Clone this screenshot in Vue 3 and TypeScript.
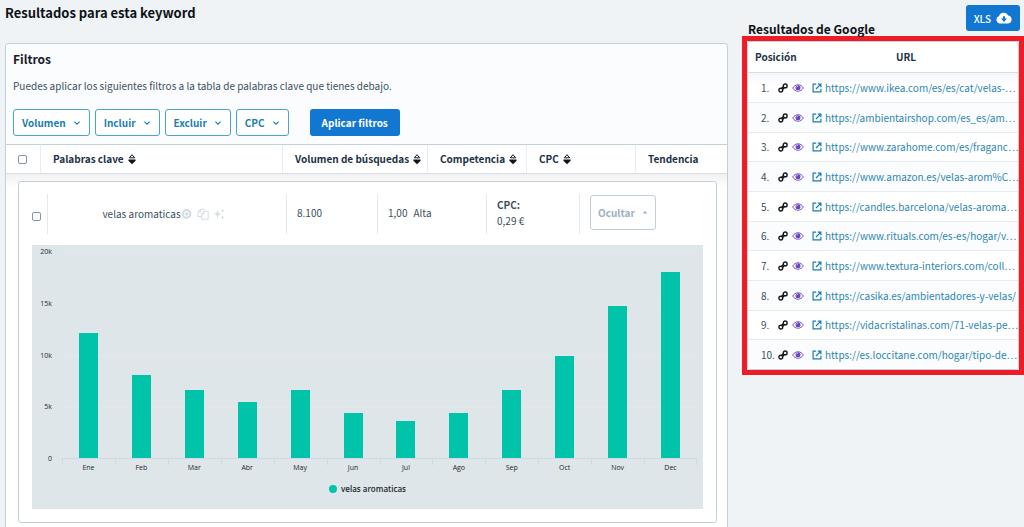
<script setup lang="ts">
import { ref } from 'vue'

interface Column {
  label: string
  sortable: boolean
}

interface Month {
  name: string
  searches: number
}

const filters: string[] = ['Volumen', 'Incluir', 'Excluir', 'CPC']

const columns: Column[] = [
  { label: 'Palabras clave', sortable: true },
  { label: 'Volumen de búsquedas', sortable: true },
  { label: 'Competencia', sortable: true },
  { label: 'CPC', sortable: true },
  { label: 'Tendencia', sortable: false },
]

const axisMax = 20000
const ticks: string[] = ['20k', '15k', '10k', '5k', '0']
const months: Month[] = [
  { name: 'Ene', searches: 12100 },
  { name: 'Feb', searches: 8100 },
  { name: 'Mar', searches: 6600 },
  { name: 'Abr', searches: 5400 },
  { name: 'May', searches: 6600 },
  { name: 'Jun', searches: 4400 },
  { name: 'Jul', searches: 3600 },
  { name: 'Ago', searches: 4400 },
  { name: 'Sep', searches: 6600 },
  { name: 'Oct', searches: 9900 },
  { name: 'Nov', searches: 14800 },
  { name: 'Dec', searches: 18100 },
]

const results: string[] = [
  'https://www.ikea.com/es/es/cat/velas-…',
  'https://ambientairshop.com/es_es/am…',
  'https://www.zarahome.com/es/fraganc…',
  'https://www.amazon.es/velas-arom%C…',
  'https://candles.barcelona/velas-aroma…',
  'https://www.rituals.com/es-es/hogar/v…',
  'https://www.textura-interiors.com/coll…',
  'https://casika.es/ambientadores-y-velas/',
  'https://vidacristalinas.com/71-velas-pe…',
  'https://es.loccitane.com/hogar/tipo-de…',
]

const allSelected = ref(false)
const rowSelected = ref(false)

const barHeight = (value: number): string => `${(value / axisMax) * 100}%`
</script>

<template>
  <div class="page">
    <main class="keywords">
      <h1 class="title">Resultados para esta keyword</h1>
      <section class="panel">
        <div class="filters">
          <h2 class="filters-title">Filtros</h2>
          <p class="filters-help">Puedes aplicar los siguientes filtros a la tabla de palabras clave que tienes debajo.</p>
          <div class="filter-bar">
            <button v-for="f in filters" :key="f" type="button" class="filter">
              {{ f }}
              <svg class="chevron" viewBox="0 0 8 8" aria-hidden="true"><path d="M1.4 2.6 4 5.2 6.6 2.6" /></svg>
            </button>
            <button type="button" class="apply">Aplicar filtros</button>
          </div>
        </div>

        <table class="kw-table">
          <colgroup>
            <col class="c-check" />
            <col />
            <col class="c-volume" />
            <col class="c-comp" />
            <col class="c-cpc" />
            <col class="c-trend" />
          </colgroup>
          <thead>
            <tr>
              <th class="check-cell"><input v-model="allSelected" type="checkbox" class="tick" aria-label="Seleccionar todo" /></th>
              <th v-for="c in columns" :key="c.label" scope="col">
                <div class="head">
                  {{ c.label }}
                  <svg v-if="c.sortable" class="sort" viewBox="0 0 8 12" aria-hidden="true">
                    <path class="sort-up" d="M1.3 4.8 4 1.7 6.7 4.8Z" />
                    <path class="sort-down" d="M.4 6.6H7.6V7.8L4 11.2.4 7.8Z" />
                  </svg>
                </div>
              </th>
            </tr>
          </thead>
          <tbody>
            <tr>
              <td colspan="6" class="card-cell">
                <article class="card">
                  <div class="row">
                    <div class="cell pick"><input v-model="rowSelected" type="checkbox" class="tick" aria-label="Seleccionar velas aromaticas" /></div>
                    <div class="cell keyword">
                      <span>velas aromaticas</span>
                      <svg class="tool" viewBox="0 0 12 12" aria-hidden="true">
                        <circle cx="5.5" cy="6" r="3.8" class="ring" /><path class="line" d="M5.5 4V8M3.5 6H7.5" />
                      </svg>
                      <svg class="tool" viewBox="0 0 12 12" aria-hidden="true">
                        <path class="line thin" d="M4.2 8.5H1V4L3.5 1.2H7V3M3.5 1.2V4H1M4.5 6 7 3.3H11.2V11.2H4.5ZM7 3.3V6H4.5" />
                      </svg>
                      <svg class="tool" viewBox="0 0 12 12" aria-hidden="true">
                        <path class="fill" d="M4.5 2 5.6 5 8.6 6 5.6 7 4.5 10 3.4 7 .4 6 3.4 5ZM9.5.8 10.1 2.2 11.5 2.8 10.1 3.4 9.5 4.8 8.9 3.4 7.5 2.8 8.9 2.2ZM9.5 7.4 10.1 8.8 11.5 9.4 10.1 10 9.5 11.4 8.9 10 7.5 9.4 8.9 8.8Z" />
                      </svg>
                    </div>
                    <div class="cell figure">8.100</div>
                    <div class="cell figure pair"><span>1,00</span><span>Alta</span></div>
                    <div class="cell cpc"><strong>CPC:</strong><span>0,29 €</span></div>
                    <div class="cell">
                      <button type="button" class="hide">
                        Ocultar
                        <svg class="caret" viewBox="0 0 6 4" aria-hidden="true"><path d="M.8 3.4 3 .8 5.2 3.4Z" /></svg>
                      </button>
                    </div>
                  </div>

                  <figure class="chart">
                    <div class="plot-area">
                      <div class="y-axis"><span v-for="t in ticks" :key="t">{{ t }}</span></div>
                      <div class="plot">
                        <div v-for="m in months" :key="m.name" class="slot">
                          <div class="bar" :style="{ height: barHeight(m.searches) }"></div>
                        </div>
                      </div>
                    </div>
                    <div class="x-axis"><span v-for="m in months" :key="m.name">{{ m.name }}</span></div>
                    <figcaption class="legend"><i class="dot"></i>velas aromaticas</figcaption>
                  </figure>
                </article>
              </td>
            </tr>
          </tbody>
        </table>
      </section>
    </main>

    <aside class="google">
      <header class="google-head">
        <h2 class="google-title">Resultados de Google</h2>
        <button type="button" class="xls">
          XLS
          <svg class="cloud" viewBox="0 0 16 12" aria-hidden="true">
            <path class="cloud-shape" d="M4 11.5A3.7 3.7 0 0 1 3 4.3 4.9 4.9 0 0 1 12.2 3.6 4 4 0 0 1 12.2 11.5Z" />
            <path class="cloud-arrow" d="M7 4.2H9V6.6H11L8 9.9 5 6.6H7Z" />
          </svg>
        </button>
      </header>
      <div class="highlight">
        <table class="g-table">
          <thead>
            <tr><th scope="col" class="g-pos">Posición</th><th scope="col">URL</th></tr>
          </thead>
          <tbody>
            <tr v-for="(url, i) in results" :key="url">
              <td>
                <div class="pos">
                  <span class="num">{{ i + 1 }}.</span>
                  <svg class="chain" viewBox="0 0 10 10" aria-hidden="true">
                    <circle cx="2.8" cy="7.1" r="1.9" />
                    <circle cx="7.2" cy="2.9" r="1.9" />
                    <path d="M3.6 5.3 5.2 3.8M4.8 6.2 6.4 4.7" />
                  </svg>
                  <svg class="eye" viewBox="0 0 12 8" aria-hidden="true">
                    <path class="lid" d="M.7 4C3.2-.3 8.8-.3 11.3 4 8.8 8.3 3.2 8.3.7 4Z" />
                    <circle class="iris" cx="6" cy="3.7" r="2.5" />
                    <path class="glint" d="M4.6 3.5A1.4 1.4 0 0 1 6 2.1" />
                  </svg>
                </div>
              </td>
              <td>
                <a class="url" href="#">
                  <svg class="open" viewBox="0 0 10 10" aria-hidden="true"><path d="M4.2 1.1H1.1V8.9H8.9V5.8M5.8 1.1H8.9V4.2M8.9 1.1 4 6" /></svg>
                  <span>{{ url }}</span>
                </a>
              </td>
            </tr>
          </tbody>
        </table>
      </div>
    </aside>
  </div>
</template>

<style>
body {
  margin: 0;
  background: #eff3f6;
}
</style>

<style scoped>
* {
  box-sizing: border-box;
}
.page {
  display: grid;
  grid-template-columns: minmax(0, 1fr) 282px;
  column-gap: 14px;
  min-height: 100vh;
  padding-left: 5px;
  background: #eff3f6;
  color: #3c5060;
  font-family: "Noto Sans CJK SC", "Noto Sans", sans-serif;
  font-size: 10px;
  line-height: 16px;
}
h1, h2, p, figure {
  margin: 0;
}
button {
  font-family: inherit;
  font-weight: 700;
  cursor: pointer;
}
svg {
  flex: none;
}
table {
  width: 100%;
  border-spacing: 0;
  table-layout: fixed;
}
th, td {
  padding: 0;
}
.keywords {
  display: flex;
  flex-direction: column;
}
.title {
  height: 43px;
  padding-top: 3px;
  color: #0d1116;
  font-size: 13px;
  line-height: 20px;
}
.panel {
  flex: 1;
  border: 1px solid #c3d0d8;
  border-bottom: 0;
  border-radius: 4px 4px 0 0;
  background: #fff;
}
.filters {
  height: 100px;
  padding: 5px 7px;
  background: #fbfcfe;
  border-radius: 4px 4px 0 0;
}
.filters-title {
  color: #14202c;
  font-size: 12px;
  line-height: 20px;
}
.filters-help {
  margin-top: 9px;
}
.filter-bar {
  display: flex;
  gap: 5px;
  margin-top: 15px;
}
.filter {
  display: flex;
  align-items: center;
  gap: 7px;
  height: 27px;
  padding: 0 8px;
  border: 1px solid #4ba3c8;
  border-radius: 3px;
  background: #fff;
  color: #1a7eae;
  font-size: 10px;
}
.chevron {
  width: 8px;
  height: 8px;
  fill: none;
  stroke: #1a7eae;
  stroke-width: 1.1;
}
.apply {
  height: 27px;
  margin-left: 16px;
  padding: 0 12px;
  border: 0;
  border-radius: 3px;
  background: #1177d1;
  color: #fff;
  font-size: 10px;
}
.c-check { width: 35px; }
.c-volume { width: 145px; }
.c-comp { width: 99px; }
.c-cpc { width: 109px; }
.c-trend { width: 91px; }
.kw-table thead th {
  height: 30px;
  padding-left: 12px;
  border-top: 1px solid #c3d0d8;
  border-right: 1px solid #e8edf0;
  border-bottom: 1px solid #d8dfe3;
  background: #fff;
  color: #1c3247;
  font-size: 10px;
  text-align: left;
  white-space: nowrap;
}
.kw-table thead th:last-child {
  border-right: 0;
}
.head {
  display: flex;
  align-items: center;
  gap: 4px;
}
.sort {
  width: 8px;
  height: 12px;
}
.sort-up {
  fill: none;
  stroke: #10151b;
  stroke-width: 1;
}
.sort-down {
  fill: #10151b;
}
.tick {
  display: block;
  width: 9px;
  height: 9px;
  margin: 0;
  appearance: none;
  border: 1px solid #8296a5;
  border-radius: 2px;
  background: #fff;
}
.tick:checked {
  background: #1177d1;
}
.card-cell {
  padding: 7px 10px 0 12px;
  background: linear-gradient(#f1f1f3, #fff 14px);
}
.card {
  padding: 12px 13px 13px;
  border: 1px solid #c3d0d8;
  border-radius: 3px;
  background: #fff;
}
.row {
  display: grid;
  grid-template-columns: 16px minmax(0, 1fr) 91px 109px 93px 123px;
  height: 40px;
  margin-bottom: 11px;
}
.cell {
  display: flex;
  align-items: center;
  border-right: 1px solid #e4e9ec;
}
.cell:last-child {
  border-right: 0;
  padding-left: 10px;
}
.pick {
  padding-top: 4px;
}
.keyword {
  justify-content: center;
  gap: 4px;
  padding-right: 7px;
}
.keyword span {
  margin-right: -4px;
}
.tool {
  width: 12px;
  height: 12px;
}
.ring {
  fill: none;
  stroke: #d5dde3;
  stroke-width: 2.2;
}
.line {
  fill: none;
  stroke: #d5dde3;
  stroke-width: 1.4;
}
.thin {
  stroke-width: 1;
}
.fill {
  fill: #d5dde3;
}
.figure {
  padding: 0 0 3px 10px;
}
.pair {
  gap: 6px;
}
.cpc {
  flex-direction: column;
  align-items: flex-start;
  justify-content: center;
  padding: 0 0 3px 10px;
}
.hide {
  display: flex;
  align-items: center;
  gap: 7px;
  height: 35px;
  margin-bottom: 4px;
  padding: 0 7px;
  border: 1px solid #c0d0d9;
  border-radius: 3px;
  background: #fff;
  color: #9db2c0;
  font-size: 10px;
}
.caret {
  width: 6px;
  height: 4px;
  fill: #9db2c0;
}
.chart {
  padding: 7px 6px 14px 0;
  background: #dfe6e9;
  color: #20282e;
  font-family: "Open Sans", "Noto Sans", sans-serif;
  font-size: 7px;
  line-height: 10px;
}
.plot-area {
  display: grid;
  grid-template-columns: 20px minmax(0, 1fr);
  column-gap: 10px;
  height: 207px;
}
.y-axis {
  display: flex;
  flex-direction: column;
  justify-content: space-between;
  margin: -5px 0;
  text-align: right;
}
.plot {
  display: grid;
  grid-template-columns: repeat(12, minmax(0, 1fr));
  border-bottom: 1px solid #ccd9e6;
  background: linear-gradient(#e5e9eb 1px, transparent 1px) 0 0 / 100% 25%;
}
.slot {
  display: flex;
  align-items: flex-end;
  justify-content: center;
}
.bar {
  width: 19px;
  background: #00c4aa;
}
.x-axis {
  display: grid;
  grid-template-columns: repeat(12, minmax(0, 1fr));
  margin-left: 30px;
  text-align: center;
}
.x-axis span {
  padding-top: 4px;
  background: linear-gradient(#ccd9e6, #ccd9e6) 0 0 / 1px 6px no-repeat;
}
.x-axis span:last-child {
  background: linear-gradient(#ccd9e6, #ccd9e6) 0 0 / 1px 6px no-repeat, linear-gradient(#ccd9e6, #ccd9e6) 100% 0 / 1px 6px no-repeat;
}
.legend {
  display: flex;
  align-items: center;
  justify-content: center;
  gap: 4px;
  height: 12px;
  margin: 10px 0 0 6px;
  font-size: 8px;
  font-weight: 600;
}
.dot {
  width: 8px;
  height: 8px;
  border-radius: 50%;
  background: #00c4aa;
}
.google-head {
  display: flex;
  justify-content: space-between;
  align-items: flex-end;
  height: 36px;
  padding: 0 4px 0 6px;
}
.google-title {
  height: 17px;
  color: #0d1116;
  font-size: 12px;
  line-height: 20px;
}
.xls {
  display: flex;
  align-items: center;
  align-self: flex-start;
  gap: 5px;
  height: 26px;
  margin-top: 5px;
  padding: 0 8px;
  border: 0;
  border-radius: 3px;
  background: #1177d1;
  color: #fff;
  font-size: 10px;
  font-weight: 500;
}
.cloud {
  width: 16px;
  height: 12px;
}
.cloud-shape {
  fill: #fff;
}
.cloud-arrow {
  fill: #1177d1;
}
.highlight {
  border: 5px solid #ee1c25;
}
.g-table {
  border: 1px solid #c3d0d8;
  border-radius: 3px;
  background: #fff;
}
.g-table th {
  height: 31px;
  border-bottom: 1px solid #d8dfe3;
  color: #1c3247;
  font-size: 10px;
  text-align: center;
}
.g-table th:last-child {
  padding-right: 18px;
}
.g-table .g-pos {
  width: 64px;
  padding-left: 7px;
  text-align: left;
}
.g-table td {
  height: 30px;
  border-bottom: 1px solid #e6ebee;
}
.g-table tr:nth-child(3n) td {
  height: 29px;
}
.g-table tr:last-child td {
  height: 29px;
  border-bottom: 0;
}
.g-table tbody tr:nth-child(even) {
  background: #fbfcfd;
}
.g-table tbody tr:first-child {
  background: linear-gradient(#f4f6fa, #fff 12px);
}
.pos {
  display: flex;
  align-items: center;
  padding-left: 13px;
}
.num {
  width: 17px;
}
.chain {
  width: 10px;
  height: 10px;
  margin-right: 4px;
  fill: none;
  stroke: #15191d;
  stroke-width: 1.4;
}
.eye {
  width: 12px;
  height: 8px;
}
.lid {
  fill: #fff;
  stroke: #7a55c7;
  stroke-width: 1;
}
.iris {
  fill: #6b43bf;
}
.glint {
  fill: none;
  stroke: #d9cdf2;
  stroke-width: .7;
}
.url {
  display: flex;
  align-items: center;
  gap: 3px;
  color: #2c86b3;
  text-decoration: none;
  white-space: nowrap;
}
.open {
  width: 10px;
  height: 10px;
  fill: none;
  stroke: #1a7eae;
  stroke-width: 1.2;
}
</style>
